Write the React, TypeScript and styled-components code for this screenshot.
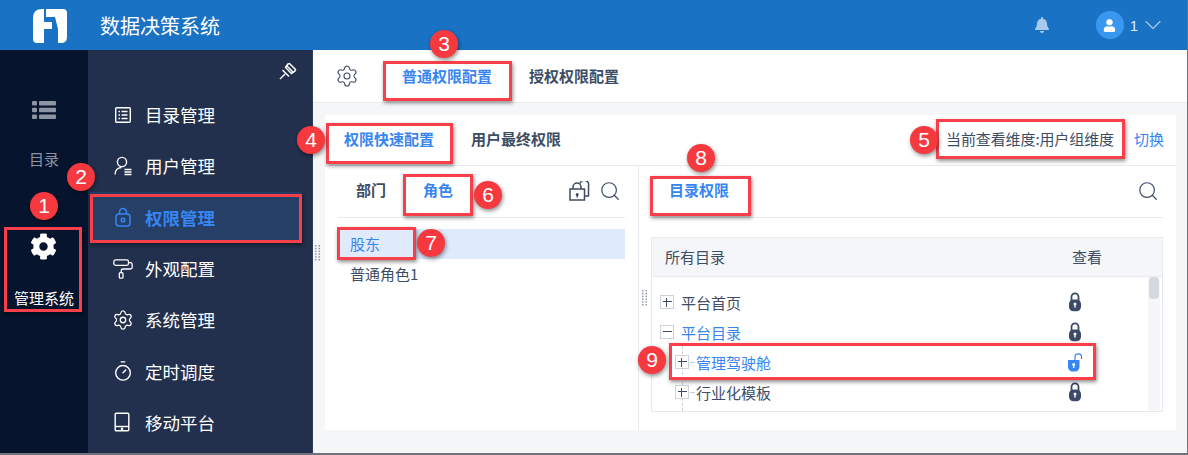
import styled, { createGlobalStyle } from "styled-components";
import { ChevronDown, PaintRoller, Search, Settings, Timer } from "lucide-react";
import { FaBell, FaCog, FaUser } from "react-icons/fa";

const BLUE = "#3685f2";
const DARK = "#3d4d66";
const LINE = "#e8eaef";

const NAV_ITEMS = [
  { label: "目录管理", icon: "catalog" },
  { label: "用户管理", icon: "user" },
  { label: "权限管理", icon: "lock" },
  { label: "外观配置", icon: "roller" },
  { label: "系统管理", icon: "gear" },
  { label: "定时调度", icon: "timer" },
  { label: "移动平台", icon: "tablet" },
];

const TREE_ROWS = [
  { label: "平台首页", nested: false, open: false, active: false },
  { label: "平台目录", nested: false, open: true, active: true },
  { label: "管理驾驶舱", nested: true, open: false, active: true },
  { label: "行业化模板", nested: true, open: false, active: false },
];

const BOXES = [
  { x: 4, y: 227, w: 78, h: 85 },
  { x: 90, y: 194, w: 212, h: 49 },
  { x: 383, y: 61, w: 129, h: 40 },
  { x: 326, y: 123, w: 127, h: 41 },
  { x: 936, y: 119, w: 189, h: 40 },
  { x: 403, y: 174, w: 70, h: 42 },
  { x: 337, y: 227, w: 79, h: 33 },
  { x: 650, y: 176, w: 101, h: 40 },
  { x: 669, y: 343, w: 427, h: 37 },
];

const BADGES = [
  { n: 1, x: 44, y: 206 },
  { n: 2, x: 81, y: 177 },
  { n: 3, x: 444, y: 44 },
  { n: 4, x: 311, y: 140 },
  { n: 5, x: 924, y: 140 },
  { n: 6, x: 488, y: 195 },
  { n: 7, x: 431, y: 243 },
  { n: 8, x: 701, y: 158 },
  { n: 9, x: 652, y: 360 },
];

function NavIcon({ name }: { name: string }) {
  switch (name) {
    case "catalog":
      return (
        <svg width="18" height="18" viewBox="0 0 18 18" fill="none" stroke="currentColor" strokeWidth="1.4">
          <rect x="1.7" y="1.7" width="14.6" height="14.6" rx="1" />
          <path d="M4.5 5.5h1.5M7.5 5.5h6M4.5 9h1.5M7.5 9h6M4.5 12.5h1.5M7.5 12.5h6" />
        </svg>
      );
    case "user":
      return (
        <svg width="18" height="20" viewBox="0 0 18 20" fill="none" stroke="currentColor" strokeWidth="1.4">
          <circle cx="8" cy="6" r="4.6" />
          <path d="M1 18.5c0-4 2.6-6.8 6.5-7" />
          <path d="M10.5 13.5h7M10.5 16h7M10.5 18.5h7" />
        </svg>
      );
    case "lock":
      return (
        <svg width="18" height="20" viewBox="0 0 18 20" fill="none" stroke="currentColor" strokeWidth="1.5">
          <rect x="2" y="7" width="14" height="12" rx="3" />
          <path d="M5.5 7V5a3.5 3.5 0 0 1 7 0v2" />
          <circle cx="9" cy="13" r="1.8" />
        </svg>
      );
    case "roller":
      return <PaintRoller size={22} strokeWidth={1.4} />;
    case "gear":
      return <Settings size={22} strokeWidth={1.4} />;
    case "timer":
      return <Timer size={22} strokeWidth={1.5} />;
    default:
      return (
        <svg width="16" height="20" viewBox="0 0 16 20" fill="none" stroke="currentColor" strokeWidth="1.4">
          <rect x="1.2" y="1.2" width="13.6" height="17.6" rx="1" />
          <path d="M1.2 14.5h13.6" />
          <circle cx="8" cy="16.7" r="0.6" fill="currentColor" />
        </svg>
      );
  }
}

function LockIcon({ open }: { open?: boolean }) {
  if (open) {
    return (
      <svg width="18" height="20" viewBox="0 0 18 20">
        <path d="M9 8V5.2a3.3 3.3 0 0 1 6.6 0V7" fill="none" stroke={BLUE} strokeWidth="1.2" />
        <path d="M2 8h11.5v7a4.6 4.6 0 0 1-4.6 4.500h-2.300A4.600 4.600 0 0 1 2 15z" fill={BLUE} />
        <circle cx="7.700" cy="12.500" r="1.500" fill="#fff" />
        <path d="M7.200 13h1l.3 3h-1.600z" fill="#fff" />
      </svg>
    );
  }
  return (
    <svg width="14" height="20" viewBox="0 0 14 20">
      <path d="M3.500 9V4.800a3.500 3.500 0 0 1 7 0V9" fill="none" stroke="#3d4a66" strokeWidth="1.800" />
      <rect x="1" y="7.500" width="12" height="11.800" rx="4.500" fill="#3d4a66" />
      <circle cx="7" cy="12" r="1.500" fill="#fff" />
      <path d="M6.500 12.500h1l.3 3h-1.600z" fill="#fff" />
    </svg>
  );
}

function Grip() {
  return (
    <svg width="6" height="16" viewBox="0 0 6 16" fill="#8f98a8">
      {[0, 1, 2, 3, 4, 5].map((r) => (
        <g key={r}>
          <rect x="0" y={r * 2.8} width="1.500" height="1.500" />
          <rect x="3.500" y={r * 2.8} width="1.500" height="1.500" />
        </g>
      ))}
    </svg>
  );
}

export default function App() {
  return (
    <>
      <GlobalStyle />
      <Page>
        <Header>
          <Logo viewBox="0 0 34 34">
            <path d="M9 0h2v13h8v7h-8v14H4q-4 0-4-4V9q0-9 9-9z" fill="#fff" />
            <path d="M13 0h17q4 0 4 4v24q0 6-6 6h-3V20L22 8h-9z" fill="#fff" />
          </Logo>
          <Title>数据决策系统</Title>
          <HeaderRight>
            <FaBell size={16} color="#a9c9ea" />
            <Avatar>
              <FaUser size={13} color="#fff" />
            </Avatar>
            <UserName>1</UserName>
            <ChevronDown size={28} strokeWidth={1} color="#a9c9ea" />
          </HeaderRight>
        </Header>

        <Body>
          <Rail>
            <RailItem>
              <svg width="24" height="20" viewBox="0 0 24 20" fill="#8d95a5">
                <rect x="0" y="1" width="5" height="4.500" rx="1" />
                <rect x="7" y="1" width="17" height="4.500" rx="1" />
                <rect x="0" y="7.700" width="5" height="4.500" rx="1" />
                <rect x="7" y="7.700" width="17" height="4.500" rx="1" />
                <rect x="0" y="14.400" width="5" height="4.500" rx="1" />
                <rect x="7" y="14.400" width="17" height="4.500" rx="1" />
              </svg>
              <RailLabel>目录</RailLabel>
            </RailItem>
            <RailItem $active>
              <FaCog size={27} color="#fff" />
              <RailLabel $active>管理系统</RailLabel>
            </RailItem>
          </Rail>

          <SideNav>
            <PinRow>
              <svg width="18" height="18" viewBox="0 0 18 18" fill="none" stroke="#fff" strokeWidth="1.500">
                <path d="M7.500 3.500l7 7" />
                <path d="M9 2l1.500-.5 6 6L16 9l-3.500 2.500-6-6z" />
                <path d="M3.500 8l6.500 6.500" />
                <path d="M6 12l-5 5" />
              </svg>
            </PinRow>
            {NAV_ITEMS.map((item) => (
              <NavItem key={item.label} $active={item.label === "权限管理"}>
                <NavIconSlot>
                  <NavIcon name={item.icon} />
                </NavIconSlot>
                {item.label}
              </NavItem>
            ))}
          </SideNav>

          <Main>
            <TopTabs>
              <Settings size={24} strokeWidth={1.1} color={DARK} />
              <TopTabList>
                <TopTab $active>普通权限配置</TopTab>
                <TopTab>授权权限配置</TopTab>
              </TopTabList>
            </TopTabs>

            <Card>
              <CardHeader>
                <CardTabs>
                  <TopTab $active>权限快速配置</TopTab>
                  <TopTab>用户最终权限</TopTab>
                </CardTabs>
                <Dimension>当前查看维度:用户组维度</Dimension>
                <SwitchLink>切换</SwitchLink>
              </CardHeader>

              <Panes>
                <LeftPane>
                  <PaneTabs>
                    <PaneTab>部门</PaneTab>
                    <PaneTab $active>角色</PaneTab>
                    <PaneTools>
                      <svg width="21" height="20" viewBox="0 0 21 20" fill="none" stroke={DARK} strokeWidth="1.500">
                        <rect x="1" y="8" width="14.500" height="11" />
                        <path d="M4 8V6a4 4 0 0 1 8 0v2" />
                        <path d="M11 2.500a4 4 0 0 1 8.500 2.500v10h-4" />
                        <circle cx="8.200" cy="13.500" r="1.500" fill={DARK} stroke="none" />
                        <path d="M7.500 14h1.400v2.500h-1.400z" fill={DARK} stroke="none" />
                      </svg>
                      <Search size={22} strokeWidth={1.300} color={DARK} />
                    </PaneTools>
                  </PaneTabs>
                  <RoleList>
                    <RoleRow $active>股东</RoleRow>
                    <RoleRow>普通角色1</RoleRow>
                  </RoleList>
                </LeftPane>

                <RightPane>
                  <PaneTabs>
                    <PaneTab $active>目录权限</PaneTab>
                    <PaneTools>
                      <Search size={22} strokeWidth={1.300} color={DARK} />
                    </PaneTools>
                  </PaneTabs>
                  <TreeTable>
                    <TreeHead>
                      <span>所有目录</span>
                      <ViewHead>查看</ViewHead>
                    </TreeHead>
                    <TreeBody>
                      <TreeRows>
                        <GuideLine />
                        {TREE_ROWS.map((row) => (
                          <TreeRow key={row.label} $nested={row.nested}>
                            <Expander $open={row.open} />
                            <TreeLabel $active={row.active} $nested={row.nested}>
                              {row.label}
                            </TreeLabel>
                            <LockSlot>
                              <LockIcon open={row.label === "管理驾驶舱"} />
                            </LockSlot>
                          </TreeRow>
                        ))}
                      </TreeRows>
                      <ScrollTrack>
                        <ScrollThumb />
                      </ScrollTrack>
                    </TreeBody>
                  </TreeTable>
                </RightPane>
              </Panes>
            </Card>
          </Main>
        </Body>

        <GripMark $x={315} $y={245}>
          <Grip />
        </GripMark>
        <GripMark $x={642} $y={290}>
          <Grip />
        </GripMark>

        {BOXES.map((b, i) => (
          <RedBox key={i} $x={b.x} $y={b.y} $w={b.w} $h={b.h} />
        ))}
        {BADGES.map((b) => (
          <Badge key={b.n} $x={b.x} $y={b.y}>
            {b.n}
          </Badge>
        ))}
      </Page>
    </>
  );
}

const GlobalStyle = createGlobalStyle`
  html, body {
    margin: 0;
    padding: 0;
    background: #fff;
  }
  body {
    font-family: "Noto Sans CJK SC", "Liberation Sans", sans-serif;
  }
`;

const Page = styled.div`
  position: relative;
  width: 1188px;
  height: 455px;
  box-sizing: border-box;
  display: flex;
  flex-direction: column;
  overflow: hidden;
  border-bottom: 2px solid #6f7278;
  border-right: 1px solid #6f7278;
`;

const Header = styled.header`
  flex: 0 0 50px;
  display: flex;
  align-items: center;
  background: #1a72c4;
  color: #fff;
  padding-left: 33px;
`;

const Logo = styled.svg`
  width: 34px;
  height: 34px;
  margin-top: 2px;
`;

const Title = styled.div`
  margin-left: 33px;
  font-size: 20px;
`;

const HeaderRight = styled.div`
  margin-left: auto;
  display: flex;
  align-items: center;
  padding-right: 20px;
`;

const Avatar = styled.div`
  width: 28px;
  height: 28px;
  margin-left: 46px;
  border-radius: 50%;
  background: #3a97f0;
  display: flex;
  align-items: center;
  justify-content: center;
`;

const UserName = styled.span`
  margin: 0 1px 0 6px;
  font-family: "Liberation Sans", sans-serif;
  font-size: 15px;
  color: #dcebf9;
`;

const Body = styled.div`
  flex: 1;
  display: flex;
  min-height: 0;
`;

const Rail = styled.nav`
  flex: 0 0 88px;
  background: #06142e;
  display: flex;
  flex-direction: column;
  align-items: center;
  padding-top: 50px;
  gap: 63px;
`;

const RailItem = styled.div<{ $active?: boolean }>`
  display: flex;
  flex-direction: column;
  align-items: center;
  gap: ${({ $active }) => ($active ? "27px" : "28px")};
  line-height: 22px;
`;

const RailLabel = styled.span<{ $active?: boolean }>`
  font-size: 15px;
  color: ${({ $active }) => ($active ? "#fff" : "#8d95a5")};
`;

const SideNav = styled.nav`
  flex: 0 0 225px;
  box-sizing: border-box;
  background: #22304d;
  border-right: 1px solid #2f3d5a;
`;

const PinRow = styled.div`
  height: 39px;
  display: flex;
  justify-content: flex-end;
  align-items: center;
  padding: 3px 15px 0 0;
  box-sizing: border-box;
`;

const NavItem = styled.div<{ $active?: boolean }>`
  height: 51.3px;
  display: flex;
  align-items: center;
  margin: 0 11px 0 2px;
  padding-left: 24px;
  font-size: 17.5px;
  font-weight: ${({ $active }) => ($active ? 700 : 400)};
  color: ${({ $active }) => ($active ? BLUE : "#fff")};
  background: ${({ $active }) => ($active ? "#263f66" : "transparent")};
`;

const NavIconSlot = styled.span`
  width: 31px;
  display: flex;
  align-items: center;

  svg.lucide {
    margin-left: -2px;
  }
`;

const Main = styled.main`
  flex: 1;
  min-width: 0;
  background: #f5f6f8;
  display: flex;
  flex-direction: column;
`;

const TopTabs = styled.div`
  flex: 0 0 53px;
  box-sizing: border-box;
  display: flex;
  align-items: center;
  padding: 0 0 0 22px;
  background: #fff;
  border-bottom: 1px solid ${LINE};
`;

const TopTabList = styled.div`
  display: flex;
  gap: 37px;
  margin-left: 43px;
  padding-bottom: 1px;
`;

const TopTab = styled.div<{ $active?: boolean }>`
  font-size: 15px;
  font-weight: 700;
  color: ${({ $active }) => ($active ? BLUE : DARK)};
`;

const Card = styled.section`
  flex: 0 0 315px;
  margin: 12px 11px 0 12px;
  background: #fff;
  display: flex;
  flex-direction: column;
  min-height: 0;
`;

const CardHeader = styled.div`
  flex: 0 0 51px;
  box-sizing: border-box;
  display: flex;
  align-items: center;
  padding: 0 12px 3px 19px;
  border-bottom: 1px solid ${LINE};
`;

const CardTabs = styled.div`
  display: flex;
  gap: 37px;
  margin-right: auto;
`;

const Dimension = styled.span`
  font-size: 15px;
  letter-spacing: -0.1px;
  color: ${DARK};
`;

const SwitchLink = styled.span`
  margin-left: 20px;
  font-size: 15px;
  color: ${BLUE};
`;

const Panes = styled.div`
  flex: 1;
  display: flex;
  min-height: 0;
`;

const LeftPane = styled.div`
  flex: 0 0 314px;
  box-sizing: border-box;
  padding: 0 13px 0 13px;
  border-right: 1px solid ${LINE};
`;

const RightPane = styled.div`
  flex: 1;
  min-width: 0;
  padding: 0 13px 0 12px;
  display: flex;
  flex-direction: column;
`;

const PaneTabs = styled.div`
  height: 52px;
  box-sizing: border-box;
  display: flex;
  align-items: center;
  gap: 37px;
  padding: 0 4px 1px 18px;
  border-bottom: 1px solid ${LINE};
`;

const PaneTab = styled.span<{ $active?: boolean }>`
  font-size: 15px;
  font-weight: 700;
  margin-top: -4px;
  color: ${({ $active }) => ($active ? BLUE : DARK)};
`;

const PaneTools = styled.div`
  margin-left: auto;
  display: flex;
  align-items: center;
  gap: 9px;
`;

const RoleList = styled.div`
  margin-top: 11px;
`;

const RoleRow = styled.div<{ $active?: boolean }>`
  height: 30px;
  box-sizing: border-box;
  display: flex;
  align-items: center;
  padding: 0 0 2px 12px;
  font-size: 15px;
  color: ${({ $active }) => ($active ? BLUE : DARK)};
  background: ${({ $active }) => ($active ? "#dfeafc" : "transparent")};
`;

const TreeTable = styled.div`
  margin-top: 19px;
  height: 175px;
  box-sizing: border-box;
  border: 1px solid ${LINE};
  display: flex;
  flex-direction: column;
`;

const TreeHead = styled.div`
  flex: 0 0 39px;
  box-sizing: border-box;
  display: flex;
  align-items: center;
  padding: 0 0 2px 13px;
  background: #f5f6f8;
  border-bottom: 1px solid ${LINE};
  font-size: 15px;
  color: ${DARK};
`;

const ViewHead = styled.span`
  margin-left: 347px;
`;

const TreeBody = styled.div`
  flex: 1;
  display: flex;
  min-height: 0;
`;

const TreeRows = styled.div`
  position: relative;
  flex: 1;
  padding-top: 10px;
`;

const GuideLine = styled.div`
  position: absolute;
  left: 30px;
  top: 69px;
  bottom: 0;
  border-left: 1px dashed #c8ccd4;
`;

const TreeRow = styled.div<{ $nested: boolean }>`
  position: relative;
  height: 30px;
  display: flex;
  align-items: center;
  padding-left: ${({ $nested }) => ($nested ? "23px" : "8px")};
`;

const Expander = styled.span<{ $open: boolean }>`
  position: relative;
  width: 14px;
  height: 14px;
  box-sizing: border-box;
  border: 1.5px solid #ccd1da;
  background: #fff;

  &::before {
    content: "";
    position: absolute;
    left: 1.5px;
    right: 1.5px;
    top: 5px;
    height: 1px;
    background: ${DARK};
  }

  &::after {
    content: "";
    display: ${({ $open }) => ($open ? "none" : "block")};
    position: absolute;
    top: 1.5px;
    bottom: 1.5px;
    left: 5px;
    width: 1px;
    background: ${DARK};
  }
`;

const TreeLabel = styled.span<{ $active: boolean; $nested: boolean }>`
  position: relative;
  margin-left: 7px;
  font-size: 15px;
  color: ${({ $active }) => ($active ? BLUE : DARK)};

  &::before {
    content: "";
    display: ${({ $nested }) => ($nested ? "block" : "none")};
    position: absolute;
    left: -6px;
    width: 5px;
    top: 50%;
    border-top: 1px dashed #c8ccd4;
  }
`;

const LockSlot = styled.span`
  position: absolute;
  left: 414px;
  top: 5px;
  width: 18px;
  display: flex;
  justify-content: center;
`;

const ScrollTrack = styled.div`
  flex: 0 0 10px;
  margin-right: 2px;
  background: #f5f6f8;
  border-radius: 4px;
  padding: 0 1px;
`;

const ScrollThumb = styled.div`
  height: 22px;
  border-radius: 4px;
  background: #d5d8de;
`;

const GripMark = styled.div<{ $x: number; $y: number }>`
  position: absolute;
  left: ${({ $x }) => $x}px;
  top: ${({ $y }) => $y}px;
  line-height: 0;
`;

const RedBox = styled.div<{ $x: number; $y: number; $w: number; $h: number }>`
  position: absolute;
  left: ${({ $x }) => $x}px;
  top: ${({ $y }) => $y}px;
  width: ${({ $w }) => $w}px;
  height: ${({ $h }) => $h}px;
  box-sizing: border-box;
  border: 3px solid #f9404a;
  box-shadow: 1px 2px 4px rgba(0, 0, 0, 0.45);
`;

const Badge = styled.div<{ $x: number; $y: number }>`
  position: absolute;
  left: ${({ $x }) => $x - 14}px;
  top: ${({ $y }) => $y - 14}px;
  width: 28px;
  height: 28px;
  border-radius: 50%;
  background: #f6393f;
  box-shadow: 1px 2px 4px rgba(0, 0, 0, 0.45);
  display: flex;
  align-items: center;
  justify-content: center;
  font-family: "Liberation Sans", sans-serif;
  font-size: 21px;
  color: #fff;
`;
